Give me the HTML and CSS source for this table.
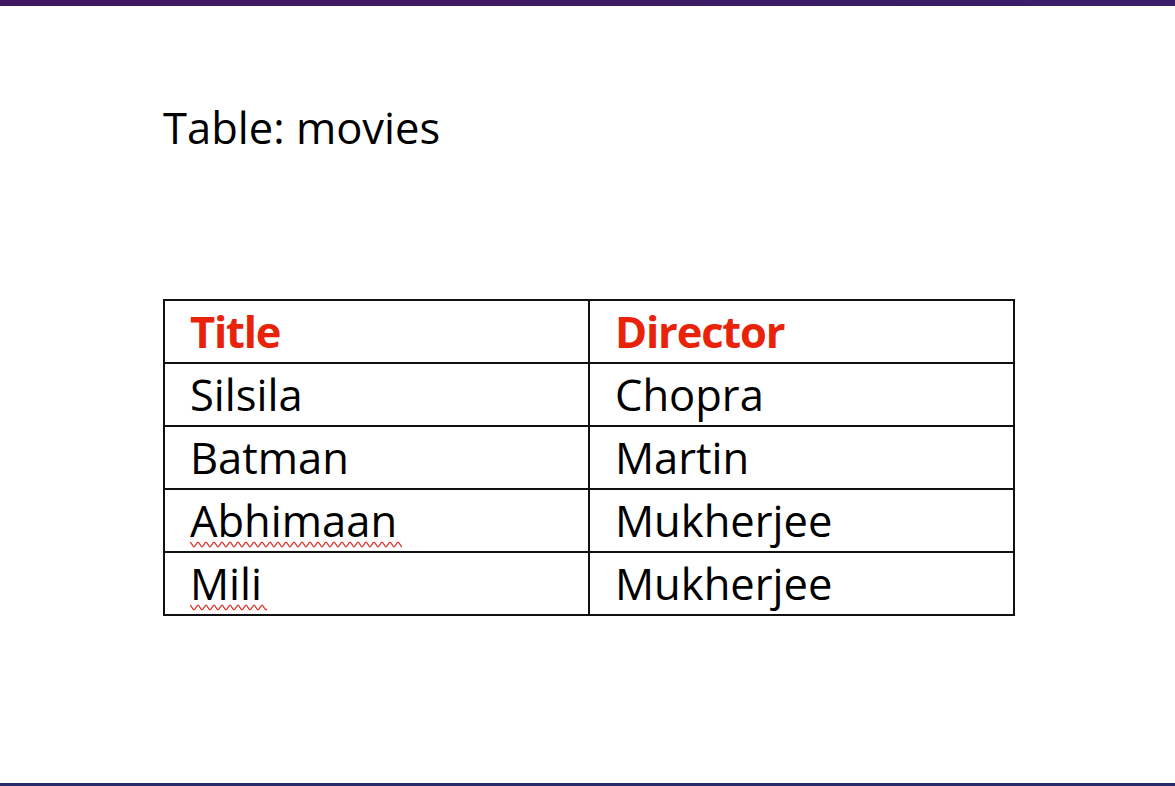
FILE: index.html
```html
<!DOCTYPE html>
<html>
<head>
<meta charset="utf-8">
<link rel="stylesheet" href="styles.css">
</head>
<body>
<div class="slide">
  <div class="top-bar"></div>
  <main class="content">
    <h1 class="heading">Table: movies</h1>
    <table class="movies">
      <thead>
        <tr><th>Title</th><th>Director</th></tr>
      </thead>
      <tbody>
        <tr><td>Silsila</td><td>Chopra</td></tr>
        <tr><td>Batman</td><td>Martin</td></tr>
        <tr><td><span class="spell">Abhimaan</span></td><td>Mukherjee</td></tr>
        <tr><td><span class="spell">Mili</span></td><td>Mukherjee</td></tr>
      </tbody>
    </table>
  </main>
  <div class="bottom-bar"></div>
</div>
</body>
</html>
```
FILE: styles.css
```css
html, body {
  margin: 0;
  padding: 0;
  background: #ffffff;
}

.slide {
  width: 1175px;
  height: 786px;
  display: flex;
  flex-direction: column;
  overflow: hidden;
  font-family: "Open Sans", "Noto Sans", sans-serif;
  color: #000;
}

.top-bar {
  height: 6px;
  flex: none;
  background: linear-gradient(90deg, #3e1861 0%, #401a62 40%, #3a1c66 70%, #3b1f6b 100%);
}

.content {
  flex: 1;
  padding-left: 163px;
}

.heading {
  margin: 93px 0 0 0;
  font-size: 43.5px;
  font-weight: 400;
  line-height: 58.6px;
}

.movies {
  margin-top: 141px;
  border-collapse: collapse;
  width: 852px;
  table-layout: fixed;
}

.movies th,
.movies td {
  border: 2px solid #111;
  height: 61px;
  padding: 0 0 0 25px;
  font-size: 43.5px;
  line-height: 61px;
  text-align: left;
  vertical-align: top;
}

.movies th {
  color: #e8230a;
  font-weight: 700;
  letter-spacing: -1.2px;
}

.movies td {
  font-weight: 400;
}

.spell {
  padding-right: 5px;
  background-image: url("data:image/svg+xml,%3Csvg xmlns='http://www.w3.org/2000/svg' width='8' height='7'%3E%3Cpath d='M0 1.2 C1.4 1.2 2.6 5.8 4 5.8 C5.4 5.8 6.6 1.2 8 1.2' fill='none' stroke='%23e0261c' stroke-width='1.3'/%3E%3C/svg%3E");
  background-repeat: repeat-x;
  background-size: 8px 7px;
  background-position: left bottom 2px;
}

.bottom-bar {
  height: 3px;
  flex: none;
  background: #262b6c;
}
```
